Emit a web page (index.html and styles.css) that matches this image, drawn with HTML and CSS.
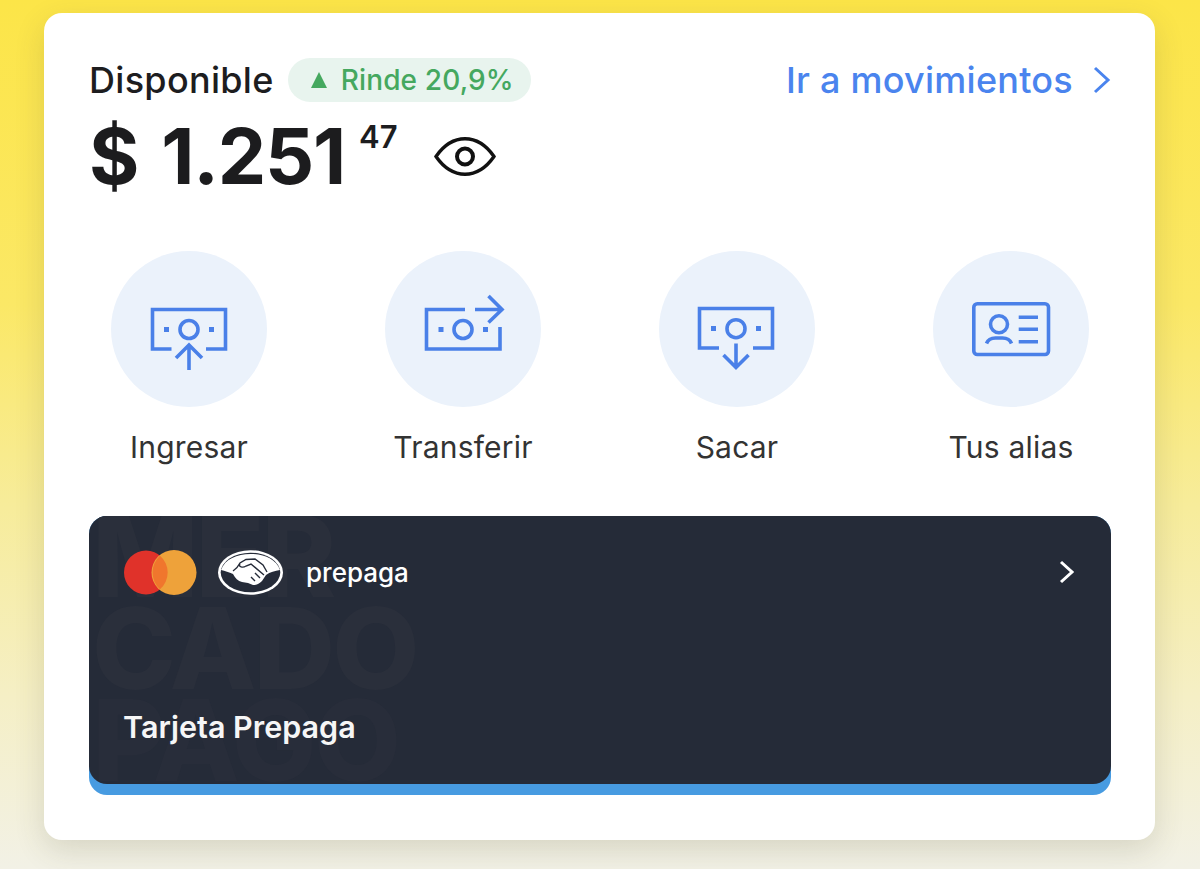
FILE: index.html
```html
<!DOCTYPE html>
<html lang="es">
<head>
<meta charset="utf-8">
<title>Disponible</title>
<link rel="stylesheet" href="styles.css">
</head>
<body>
<main class="panel">
  <header class="top">
    <div class="top-left">
      <span class="label">Disponible</span>
      <span class="badge"><i class="tri"></i>Rinde 20,9%</span>
    </div>
    <a class="link">Ir a movimientos
      <svg class="link-chev" viewBox="0 0 18 28"><path d="M2 2l13 12L2 26"/></svg>
    </a>
  </header>
  <div class="balance">
    <span class="amount">$ 1.251</span><span class="cents">47</span>
    <svg class="eye" viewBox="0 0 62 40"><path class="eye-line" d="M2 19.5C10 8 20 1.8 31 1.8S52 8 60 19.5C52 31 42 37.2 31 37.2S10 31 2 19.5z"/><circle class="eye-ring" cx="31" cy="19.5" r="8"/></svg>
  </div>
  <section class="actions">
    <div class="action">
      <div class="disc"><svg class="ico" viewBox="0 0 156 156">
        <path d="M60.5 98H41.5V58.5H114.5V98H95"/><circle cx="78" cy="78.5" r="9"/>
        <rect class="dot" x="53" y="76" width="5" height="5"/><rect class="dot" x="98" y="76" width="5" height="5"/>
        <path d="M65 107L78 94L91 107M78 94V119"/></svg></div>
      <span class="cap">Ingresar</span>
    </div>
    <div class="action">
      <div class="disc"><svg class="ico" viewBox="0 0 156 156">
        <path d="M80 58.5H41.5V98H115V76"/><path d="M90 58.5H117M103.5 45L117 58.5L103.5 71.5"/><circle cx="78" cy="78.5" r="9"/>
        <rect class="dot" x="53.5" y="76" width="5" height="5"/><rect class="dot" x="98" y="76" width="5" height="5"/></svg></div>
      <span class="cap">Transferir</span>
    </div>
    <div class="action">
      <div class="disc"><svg class="ico" viewBox="0 0 156 156">
        <path d="M60 97H40.5V57.5H113.5V97H94"/><circle cx="77" cy="77.7" r="9"/>
        <rect class="dot" x="52" y="75" width="5" height="5"/><rect class="dot" x="97" y="75" width="5" height="5"/>
        <path d="M77 92.5V116M64.5 104L77 116.5L89.5 104"/></svg></div>
      <span class="cap">Sacar</span>
    </div>
    <div class="action">
      <div class="disc"><svg class="ico" viewBox="0 0 156 156">
        <rect x="40.8" y="52.8" width="74.7" height="50.7" rx="3.5"/><circle cx="66" cy="73.3" r="8.5"/>
        <path d="M53.5 92.5c1.5-4 5-5.5 9-5.5h7c4 0 7.5 1.5 9 5.5"/>
        <path d="M85.7 66.3H105M85.7 78.3H105M85.7 90.7H105"/></svg></div>
      <span class="cap">Tus alias</span>
    </div>
  </section>
  <section class="card-edge">
    <div class="card">
      <div class="mark" aria-hidden="true">MER<br>CADO<br><span class="mark-faint">PAGO</span></div>
      <div class="card-top">
        <svg class="mc" viewBox="0 0 73 45"><circle class="mc-r" cx="22" cy="22.5" r="22"/><circle class="mc-o" cx="50" cy="22.5" r="22.5"/><path class="mc-m" d="M36 5.8a22 22 0 0 1 0 33.4a22.5 22.5 0 0 1 0-33.4z"/></svg>
        <svg class="mp" viewBox="0 0 65 45">
          <ellipse class="mp-w" cx="32.5" cy="22.5" rx="32.5" ry="22.3"/>
          <ellipse class="mp-d" cx="32.5" cy="22.5" rx="29.8" ry="19.8"/>
          <path class="mp-w" d="M3 20C7 9 19 4 32.5 4S58 9 62 20C57 21 52 22 48 25L44 31C41 34 38 35 35 35L30 33L24 32C20 31 17 28 15 24C11 22 7 21 3 20z"/>
          <path class="mp-l" d="M15 21C18 19 20 17 22 13L28 9.5L37 9L45 15L49 22M22 14C20 17 25 18 28 16L33 14L46 25M37 23L42 28M33 27L37 31"/>
        </svg>
        <span class="pre">prepaga</span>
        <svg class="card-chev" viewBox="0 0 16 24"><path d="M2 2l11 10L2 22"/></svg>
      </div>
      <div class="card-title">Tarjeta Prepaga</div>
    </div>
  </section>
</main>
</body>
</html>
```
FILE: styles.css
```css
* { box-sizing: border-box; }
html, body { margin: 0; height: 100%; }
body {
  height: 869px;
  overflow: hidden;
  padding: 13px 45px 0 44px;
  background: linear-gradient(180deg, #fce548 0%, #fbe866 35%, #f7ec9a 58%, #f5efc5 80%, #f2f1e6 100%);
  font-family: "Inter", "Liberation Sans", sans-serif;
  color: #1d1d1f;
}
.panel {
  height: 827px;
  background: #fff;
  border-radius: 18px;
  padding: 40px 44px 45px 45px;
  display: flex;
  flex-direction: column;
  box-shadow: 0 10px 30px rgba(70, 70, 50, .16);
}
.top { display: flex; justify-content: space-between; align-items: center; height: 54px; }
.top-left { display: flex; align-items: center; gap: 14px; }
.label { font-size: 36px; font-weight: 500; letter-spacing: .3px; }
.badge {
  display: flex; align-items: center; gap: 14px;
  height: 44px; padding: 0 17px 0 23px;
  background: #e8f4ee; border-radius: 22px;
  color: #45a85f; font-size: 28px; font-weight: 500; letter-spacing: .15px;
}
.tri { width: 0; height: 0; border: 8px solid transparent; border-top: 0; border-bottom: 16px solid #45a85f; }
.link { display: flex; align-items: center; gap: 20px; color: #4a84ee; font-size: 36px; font-weight: 500; letter-spacing: .25px; }
.link-chev { width: 18px; height: 28px; fill: none; stroke: #4a84ee; stroke-width: 3; }
.balance { display: flex; align-items: flex-start; height: 86px; margin-top: 6px; }
.amount { font-size: 77px; font-weight: 700; line-height: 86px; color: #1c1c1e; letter-spacing: -1.2px; word-spacing: 6px; }
.cents { font-size: 31px; font-weight: 600; line-height: 40px; margin: 4px 0 0 14px; }
.eye { width: 62px; height: 40px; margin: 24px 0 0 36px; fill: none; stroke: #111; stroke-width: 3.4; }
.eye-ring { stroke-width: 4; }
.actions { display: flex; justify-content: space-between; padding: 0 22px; margin-top: 52px; }
.action { width: 156px; display: flex; flex-direction: column; align-items: center; gap: 20px; }
.disc { width: 156px; height: 156px; border-radius: 50%; background: #ebf2fb; }
.ico { display: block; width: 156px; height: 156px; fill: none; stroke: #4a80e8; stroke-width: 3.6; }
.ico .dot { fill: #4a80e8; stroke: none; }
.cap { font-size: 30px; line-height: 40px; color: #333; white-space: nowrap; letter-spacing: .2px; }
.card-edge { margin-top: 49px; height: 279px; background: #479be1; border-radius: 18px; }
.card {
  position: relative; height: 268px; overflow: hidden;
  background: #252b38; border-radius: 18px;
  padding: 33px 36px 0 35px;
  display: flex; flex-direction: column;
}
.mark {
  position: absolute; left: 3px; top: -6px;
  font-size: 113px; line-height: 92px; font-weight: 800;
  color: #2a2f3b; letter-spacing: -3px;
}
.mark-faint { color: #282d3a; }
.card-top { position: relative; display: flex; align-items: center; height: 46px; }
.mc { width: 73px; height: 45px; }
.mc-r { fill: #e0322a; }
.mc-o { fill: #eea23a; }
.mc-m { fill: #f0762d; }
.mp { width: 65px; height: 45px; margin-left: 21px; }
.mp-w { fill: #fff; }
.mp-d { fill: #252b38; }
.mp-l { fill: none; stroke: #252b38; stroke-width: 1.4; }
.pre { margin-left: 23px; font-size: 26px; font-weight: 500; color: #fff; }
.card-chev { width: 16px; height: 24px; margin-left: auto; fill: none; stroke: #fff; stroke-width: 3; }
.card-title { position: relative; margin: 112px 0 0 -1px; font-size: 30.5px; font-weight: 600; line-height: 40px; color: #f6f6f6; }
```
